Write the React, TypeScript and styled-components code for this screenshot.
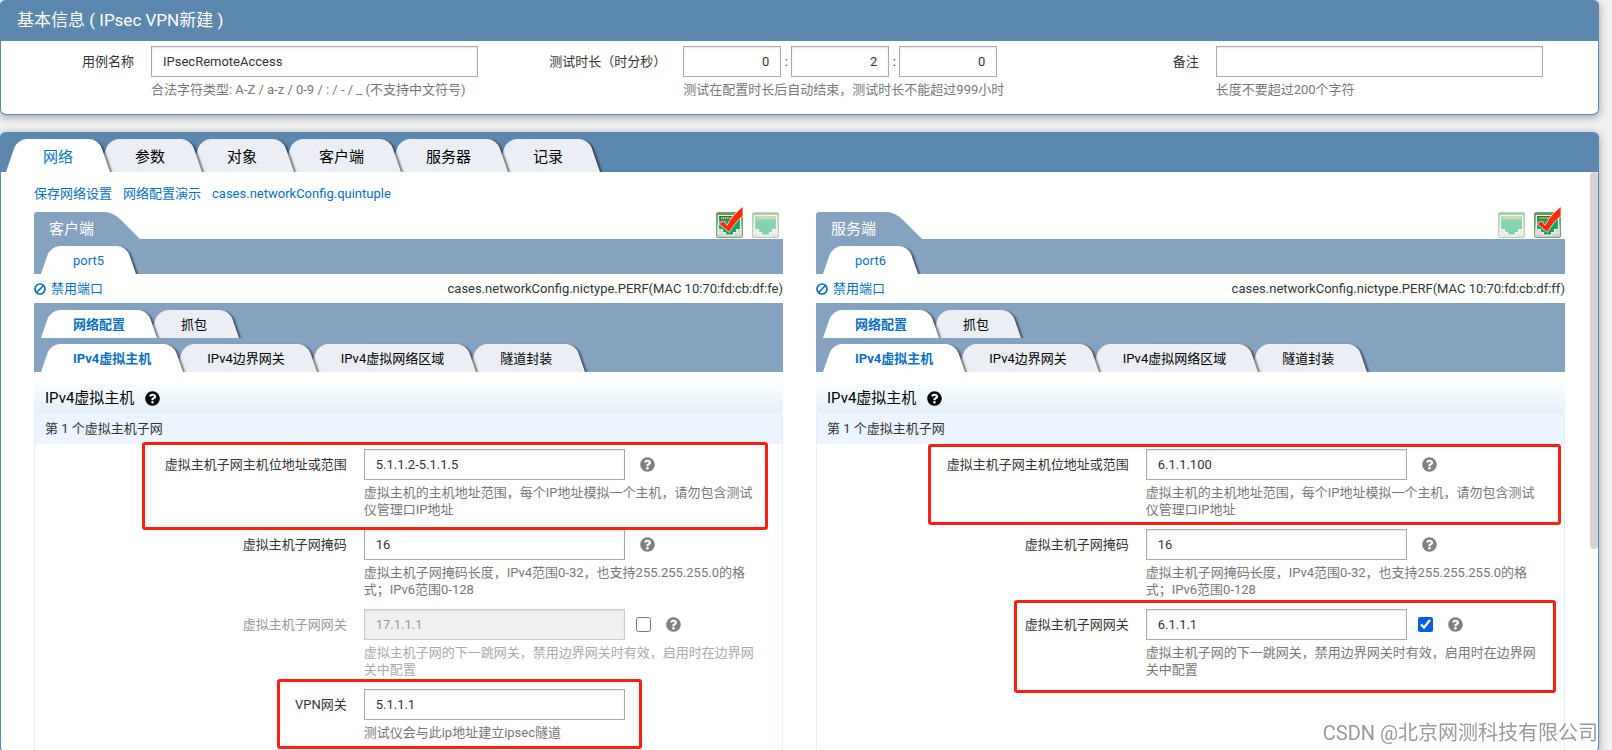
import React, { useId } from 'react';
import styled, { createGlobalStyle, css } from 'styled-components';

const Global = createGlobalStyle`
  *, *::before, *::after { box-sizing: border-box; }
  body {
    margin: 0;
    background: #f0f0f0;
    color: #333;
    font: 13px/17px Roboto, 'Noto Sans CJK SC', sans-serif;
  }
  button, input { font: inherit; color: inherit; }
  a { color: #0a6fc2; text-decoration: none; }
`;

const Page = styled.main`
  display: flex;
  flex-direction: column;
  gap: 17px;
  height: 100vh;
  padding-right: 13px;
  overflow: hidden;
`;

const Card = styled.section<{ $fill?: boolean }>`
  position: relative;
  display: flex;
  flex-direction: column;
  flex: ${p => (p.$fill ? '1 0 auto' : 'none')};
  background: #fff;
  border: 1px solid #5c87af;
  border-top: 0;
  border-radius: 6px;
  box-shadow: 0 2px 8px rgba(0, 0, 0, 0.35);
`;

const CardTitle = styled.h1`
  margin: 0 -1px;
  padding: 0 17px;
  background: #5c87af;
  border-radius: 6px 6px 0 0;
  color: #fff;
  font-size: 17px;
  font-weight: 400;
  line-height: 41px;
`;

const BasicForm = styled.form`
  display: grid;
  grid-template-columns: repeat(3, 1fr);
  padding: 5px 0 16px;
`;

const BasicField = styled.div`
  display: grid;
  grid-template-columns: 150px 1fr;
  padding-right: 55px;
`;

const Label = styled.label<{ $muted?: boolean }>`
  padding-right: 17px;
  color: ${p => (p.$muted ? '#999' : '#333')};
  line-height: 31px;
  text-align: right;
  white-space: nowrap;
`;

const TextInput = styled.input`
  width: 100%;
  min-width: 0;
  height: 31px;
  padding: 0 11px;
  background: #fff;
  border: 1px solid #aaa;
  border-radius: 0;
  box-shadow: inset 0 1px 2px rgba(0, 0, 0, 0.1);
  outline: 0;
  &:disabled {
    background: #f0f0f0;
    border-color: #ccc;
    color: #999;
  }
`;

const TimeInput = styled(TextInput)`
  width: 98px;
  text-align: right;
`;

const TimeGroup = styled.div`
  display: flex;
  align-items: center;
`;

const Colon = styled.span`
  width: 10px;
  text-align: center;
`;

const Hint = styled.p<{ $muted?: boolean }>`
  grid-column: 2 / -1;
  margin: 4px 0 0;
  color: ${p => (p.$muted ? '#aaa' : '#777')};
`;

const TabBar = styled.div<{ $size: 'large' | 'small'; $stacked?: boolean }>`
  display: flex;
  overflow: hidden;
  ${p =>
    p.$size === 'large'
      ? css`
          margin: 0 -1px;
          padding: 7px 6px 0;
          background: #5c87af;
          border-radius: 6px 6px 0 0;
          font-size: 15px;
        `
      : css`
          padding: ${p.$stacked ? 6 : 7}px 7px 0;
          background: #86a2c1;
        `}
`;

const Tab = styled.button<{ $size: 'large' | 'small'; $active?: boolean; $order: number }>`
  --fill: ${p => (p.$active ? '#fff' : '#ebeef4')};
  position: relative;
  z-index: ${p => 10 - p.$order};
  flex: none;
  height: ${p => (p.$size === 'large' ? 33 : 28)}px;
  padding: ${p => (p.$size === 'large' ? '4px 37px 0' : '1px 32px 0')};
  background: none;
  border: 0;
  color: ${p => (p.$active ? '#0a6fc2' : '#000')};
  cursor: pointer;
  &:not(:first-child) { margin-left: ${p => (p.$size === 'large' ? -12 : -8)}px; }
  &::before, &::after {
    content: '';
    position: absolute;
    z-index: -1;
    top: 0;
    bottom: 0;
    background: var(--fill);
  }
  &::before {
    left: 0;
    width: 60%;
    border-top-left-radius: 9px;
    transform: skewX(-19deg);
    transform-origin: bottom left;
  }
  &::after {
    right: 0;
    width: 60%;
    border-top-right-radius: 9px;
    box-shadow: 2px 1px 2px rgba(0, 0, 0, 0.5);
    transform: skewX(19deg);
    transform-origin: bottom right;
  }
`;

const TabText = styled.span<{ $strong?: boolean }>`
  font-weight: ${p => (p.$strong ? 700 : 400)};
  white-space: nowrap;
`;

const LinkRow = styled.nav`
  display: flex;
  gap: 11px;
  padding: 13px 33px 10px;
`;

const Columns = styled.div`
  display: grid;
  flex: 1;
  grid-template-columns: 1fr 1fr;
  gap: 33px;
  padding: 0 33px;
`;

const SideRoot = styled.section`
  display: flex;
  flex-direction: column;
  min-width: 0;
`;

const ScrollThumb = styled.div`
  position: absolute;
  top: 40px;
  right: 0;
  width: 8px;
  height: 377px;
  background: #d4d4d4;
  border-radius: 4px;
`;

const SideHead = styled.header`
  display: flex;
  justify-content: space-between;
  height: 27px;
`;

const SideTitle = styled.h2`
  position: relative;
  z-index: 0;
  margin: 0;
  padding: 2px 45px 0 15px;
  color: #fff;
  font-size: 15px;
  font-weight: 400;
  line-height: 30px;
  height: 27px;
  &::before, &::after {
    content: '';
    position: absolute;
    z-index: -1;
    inset: 0 40px 0 0;
    background: #86a2c1;
    border-radius: 3px 0 0 0;
  }
  &::after {
    inset: 0 0 0 50%;
    border-radius: 0 8px 0 0;
    transform: skewX(45deg);
    transform-origin: bottom right;
  }
`;

const Ports = styled.div`
  display: flex;
  gap: 9px;
  padding-right: 4px;
`;

const PortButton = styled.button`
  width: 27px;
  height: 26px;
  padding: 0;
  background: none;
  border: 0;
  svg { display: block; overflow: visible; }
`;

const PortInfo = styled.div`
  display: flex;
  align-items: center;
  justify-content: space-between;
  height: 29px;
`;

const DisableLink = styled.a`
  display: flex;
  align-items: center;
  gap: 5px;
`;

const SectionTitle = styled.h3`
  display: flex;
  align-items: center;
  gap: 11px;
  height: 30px;
  margin: 11px 0 0;
  padding: 0 11px;
  background: linear-gradient(#fbfeff, #e2f0f8);
  color: #000;
  font-size: 15px;
  font-weight: 400;
`;

const SectionBody = styled.div`
  flex: 1;
  border: solid #e2f0f8;
  border-width: 0 1px;
`;

const SubTitle = styled.h4`
  margin: 0 0 5px;
  padding: 0 10px;
  background: #ebf4ff;
  font-size: 13px;
  font-weight: 400;
  line-height: 31px;
`;

const FieldRow = styled.div`
  position: relative;
  display: grid;
  grid-template-columns: 44% 35% 18%;
  margin-bottom: 11px;
`;

const Extras = styled.div`
  display: flex;
  align-items: center;
  gap: 15px;
  padding-left: 11px;
`;

const Check = styled.input`
  width: 15px;
  height: 15px;
  margin: 0;
  accent-color: #005fe0;
`;

const HelpSlot = styled.span<{ $alone: boolean }>`
  display: flex;
  padding-left: ${p => (p.$alone ? 4 : 0)}px;
`;

const Mark = styled.div<{ $x: number; $y: number; $w: number; $h: number }>`
  position: absolute;
  z-index: 1;
  left: ${p => p.$x}px;
  top: ${p => p.$y}px;
  width: ${p => p.$w}px;
  height: ${p => p.$h}px;
  border: 3px solid #ff1f12;
  border-radius: 3px;
  pointer-events: none;
`;

const Watermark = styled.div`
  position: fixed;
  z-index: 20;
  right: 14px;
  bottom: 5px;
  color: #999;
  font-size: 20px;
  line-height: 24px;
  text-shadow: 1px 1px 1px #fff;
`;

function HelpIcon({ color }: { color: string }) {
  return (
    <svg width="15" height="15" viewBox="0 0 512 512" role="img" aria-label="帮助">
      <path
        fill={color}
        d="M504 256c0 137-111 248-248 248S8 393 8 256 119 8 256 8s248 111 248 248zM262.700 90c-54.500 0-89.300 23-116.500 63.800-3.500 5.300-2.400 12.400 2.700 16.300l34.700 26.300c5.200 3.900 12.600 3 16.700-2.100 17.900-22.700 30.100-35.800 57.300-35.800 20.400 0 45.700 13.100 45.700 33 0 15-12.400 22.700-32.500 34C247.100 238.500 216 254.900 216 296v4c0 6.600 5.400 12 12 12h56c6.600 0 12-5.400 12-12v-1.300c0-28.500 83.200-29.600 83.200-106.700 0-58-60.200-102-116.500-102zM256 338c-25.400 0-46 20.600-46 46s20.600 46 46 46 46-20.600 46-46-20.600-46-46-46z"
      />
    </svg>
  );
}

function BanIcon() {
  return (
    <svg width="12" height="12" viewBox="0 0 12 12" fill="none" stroke="#0a6fc2" strokeWidth="1.700" aria-hidden="true">
      <circle cx="6" cy="6" r="5" />
      <path d="M2.500 9.500l7-7" />
    </svg>
  );
}

function PortIcon({ on }: { on: boolean }) {
  const id = useId();
  return (
    <svg width="27" height="26" viewBox="0 0 27 26" aria-hidden="true">
      <defs>
        <linearGradient id={`${id}-case`} x1="0" y1="0" x2="0" y2="1">
          <stop offset="0" stopColor="#5f9560" />
          <stop offset="0.450" stopColor="#8fae8c" />
          <stop offset="0.800" stopColor="#e2e2e2" />
          <stop offset="1" stopColor="#c4c9c0" />
        </linearGradient>
        <linearGradient id={`${id}-jack`} x1="0" y1="0" x2="0" y2="1">
          <stop offset="0" stopColor={on ? '#3f5a40' : '#7fbf98'} />
          <stop offset="0.300" stopColor="#12a866" />
          <stop offset="1" stopColor="#0aa562" />
        </linearGradient>
      </defs>
      <g opacity={on ? 1 : 0.5}>
        <rect x="0.500" y="0.500" width="26" height="25" rx="1.500" fill={`url(#${id}-case)`} stroke="#73a860" />
        <path
          d="M2.500 3.500h22v14h-4v3h-3v2.500h-8v-2.500h-3v-3h-4z"
          fill={`url(#${id}-jack)`}
          stroke="#efefef"
          strokeWidth="1.200"
        />
        <path d="M5 6h17" stroke="#d9b04a" strokeWidth="1.800" strokeDasharray="1.500 0.500" />
      </g>
      {on && (
        <path
          d="M2.500 11.500l5.500-2.500 3 4.500C15 5.500 20 0 27-5.500V4C21 8.500 17 14 13.500 20.500z"
          fill="#ff2a0a"
          stroke="#fff"
          strokeWidth="0.700"
        />
      )}
    </svg>
  );
}

interface TabItem {
  text: string;
  strong?: boolean;
}

interface TabsProps {
  items: TabItem[];
  size: 'large' | 'small';
  stacked?: boolean;
}

function Tabs({ items, size, stacked }: TabsProps) {
  return (
    <TabBar $size={size} $stacked={stacked} role="tablist">
      {items.map((item, i) => (
        <Tab key={item.text} type="button" role="tab" aria-selected={i === 0} $size={size} $active={i === 0} $order={i}>
          <TabText $strong={item.strong}>{item.text}</TabText>
        </Tab>
      ))}
    </TabBar>
  );
}

interface MarkBox {
  x: number;
  y: number;
  w: number;
  h: number;
}

interface FieldProps {
  label: string;
  value: string;
  hint: string;
  disabled?: boolean;
  checked?: boolean;
  noHelp?: boolean;
  mark?: MarkBox;
}

function Field({ label, value, hint, disabled, checked, noHelp, mark }: FieldProps) {
  const id = useId();
  const hasCheck = checked !== undefined;
  return (
    <FieldRow>
      <Label htmlFor={id} $muted={disabled}>{label}</Label>
      <TextInput id={id} defaultValue={value} disabled={disabled} />
      <Extras>
        {hasCheck && <Check type="checkbox" defaultChecked={checked} aria-label={`启用${label}`} />}
        {!noHelp && (
          <HelpSlot $alone={!hasCheck}>
            <HelpIcon color="#808080" />
          </HelpSlot>
        )}
      </Extras>
      <Hint $muted={disabled}>{hint}</Hint>
      {mark && <Mark $x={mark.x} $y={mark.y} $w={mark.w} $h={mark.h} />}
    </FieldRow>
  );
}

interface SideProps {
  title: string;
  port: string;
  mac: string;
  ports: boolean[];
  fields: FieldProps[];
}

function Side({ title, port, mac, ports, fields }: SideProps) {
  return (
    <SideRoot>
      <SideHead>
        <SideTitle>{title}</SideTitle>
        <Ports>
          {ports.map((on, i) => (
            <PortButton key={i} type="button" aria-label={`端口 ${i + 1}`} aria-pressed={on}>
              <PortIcon on={on} />
            </PortButton>
          ))}
        </Ports>
      </SideHead>
      <Tabs size="small" items={[{ text: port }]} />
      <PortInfo>
        <DisableLink href="#disable"><BanIcon />禁用端口</DisableLink>
        <span>cases.networkConfig.nictype.PERF(MAC {mac})</span>
      </PortInfo>
      <Tabs size="small" items={[{ text: '网络配置', strong: true }, { text: '抓包' }]} />
      <Tabs
        size="small"
        stacked
        items={[
          { text: 'IPv4虚拟主机', strong: true },
          { text: 'IPv4边界网关' },
          { text: 'IPv4虚拟网络区域' },
          { text: '隧道封装' },
        ]}
      />
      <SectionTitle>IPv4虚拟主机<HelpIcon color="#000" /></SectionTitle>
      <SectionBody>
        <SubTitle>第 1 个虚拟主机子网</SubTitle>
        {fields.map(f => <Field key={f.label} {...f} />)}
      </SectionBody>
    </SideRoot>
  );
}

const HOST = {
  label: '虚拟主机子网主机位地址或范围',
  hint: '虚拟主机的主机地址范围，每个IP地址模拟一个主机，请勿包含测试仪管理口IP地址',
};
const MASK = {
  label: '虚拟主机子网掩码',
  hint: '虚拟主机子网掩码长度，IPv4范围0-32，也支持255.255.255.0的格式；IPv6范围0-128',
};
const GATEWAY = {
  label: '虚拟主机子网网关',
  hint: '虚拟主机子网的下一跳网关，禁用边界网关时有效，启用时在边界网关中配置',
};

const CLIENT: FieldProps[] = [
  { ...HOST, value: '5.1.1.2-5.1.1.5', mark: { x: 107, y: -7, w: 626, h: 88 } },
  { ...MASK, value: '16' },
  { ...GATEWAY, value: '17.1.1.1', disabled: true, checked: false },
  {
    label: 'VPN网关',
    value: '5.1.1.1',
    hint: '测试仪会与此ip地址建立ipsec隧道',
    noHelp: true,
    mark: { x: 242, y: -10, w: 365, h: 70 },
  },
];

const SERVER: FieldProps[] = [
  { ...HOST, value: '6.1.1.100', mark: { x: 111, y: -5, w: 633, h: 81 } },
  { ...MASK, value: '16' },
  { ...GATEWAY, value: '6.1.1.1', checked: true, mark: { x: 197, y: -9, w: 542, h: 93 } },
];

export default function App() {
  return (
    <>
      <Global />
      <Page>
        <Card>
          <CardTitle>基本信息 ( IPsec VPN新建 )</CardTitle>
          <BasicForm>
            <BasicField>
              <Label htmlFor="case-name">用例名称</Label>
              <TextInput id="case-name" defaultValue="IPsecRemoteAccess" />
              <Hint>合法字符类型: A-Z / a-z / 0-9 / : / - / _ (不支持中文符号)</Hint>
            </BasicField>
            <BasicField>
              <Label htmlFor="hours">测试时长（时分秒）</Label>
              <TimeGroup>
                <TimeInput id="hours" defaultValue="0" />
                <Colon>:</Colon>
                <TimeInput aria-label="分" defaultValue="2" />
                <Colon>:</Colon>
                <TimeInput aria-label="秒" defaultValue="0" />
              </TimeGroup>
              <Hint>测试在配置时长后自动结束，测试时长不能超过999小时</Hint>
            </BasicField>
            <BasicField>
              <Label htmlFor="remark">备注</Label>
              <TextInput id="remark" />
              <Hint>长度不要超过200个字符</Hint>
            </BasicField>
          </BasicForm>
        </Card>
        <Card $fill>
          <Tabs
            size="large"
            items={['网络', '参数', '对象', '客户端', '服务器', '记录'].map(text => ({ text }))}
          />
          <LinkRow>
            <a href="#save">保存网络设置</a>
            <a href="#demo">网络配置演示</a>
            <a href="#quintuple">cases.networkConfig.quintuple</a>
          </LinkRow>
          <Columns>
            <Side title="客户端" port="port5" mac="10:70:fd:cb:df:fe" ports={[true, false]} fields={CLIENT} />
            <Side title="服务端" port="port6" mac="10:70:fd:cb:df:ff" ports={[false, true]} fields={SERVER} />
          </Columns>
          <ScrollThumb />
        </Card>
      </Page>
      <Watermark>CSDN @北京网测科技有限公司</Watermark>
    </>
  );
}
